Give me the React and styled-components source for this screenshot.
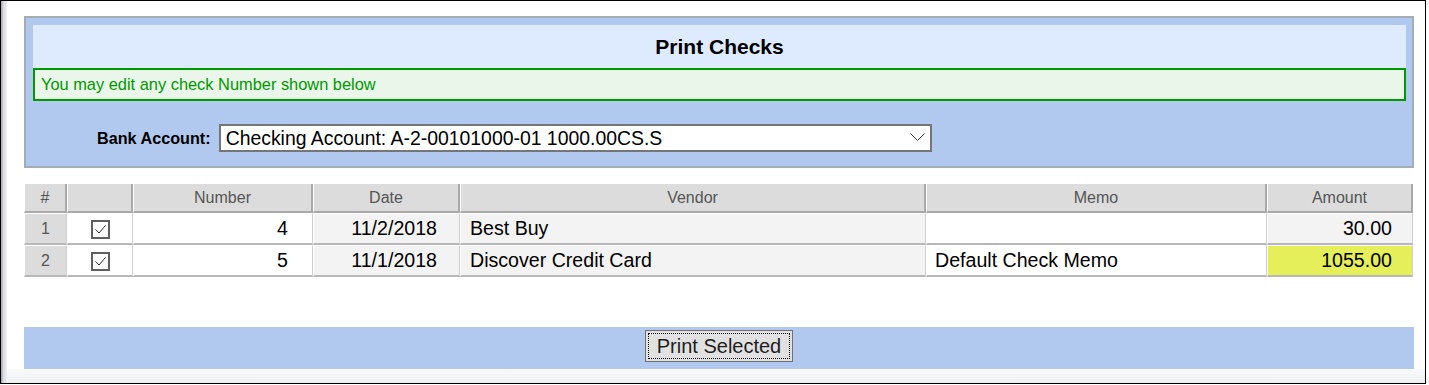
import React from 'react';
import styled, { createGlobalStyle } from 'styled-components';

const GlobalStyle = createGlobalStyle`
  html, body {
    margin: 0;
    padding: 0;
    background: #ffffff;
  }
  body {
    font-family: "Liberation Sans", Arial, sans-serif;
  }
`;

const Frame = styled.div`
  width: 1426px;
  height: 384px;
  box-sizing: border-box;
  border: 1px solid #000;
  display: flex;
  background: #fff;
`;

const EdgeStrip = styled.div`
  width: 6px;
  flex: none;
  background: linear-gradient(to right, #a9adb2 0, #a9adb2 1px, #d9dcdf 2px, #e6e8ea 5px, #f3f4f5 6px);
`;

const Content = styled.div`
  flex: 1;
  display: flex;
  flex-direction: column;
  min-width: 0;
`;

const Inner = styled.div`
  flex: 1;
  padding: 15px 11px 0 17px;
  display: flex;
  flex-direction: column;
`;

const BottomStrip = styled.div`
  height: 14px;
  flex: none;
  background: linear-gradient(to bottom, #f9fafb, #eef0f1);
`;

const Panel = styled.div`
  border: 2px solid #a5acb3;
  background: #b1c9ee;
  padding: 7px 6px 14px 7px;
  display: flex;
  flex-direction: column;
`;

const Title = styled.div`
  height: 43px;
  background: #deebfe;
  display: flex;
  align-items: center;
  justify-content: center;
  font-size: 21px;
  font-weight: bold;
  color: #000;
  padding-top: 1px;
  box-sizing: border-box;
`;

const Notice = styled.div`
  height: 33px;
  box-sizing: border-box;
  border: 2px solid #009900;
  background: #eaf6ea;
  color: #009900;
  font-size: 16.4px;
  display: flex;
  align-items: center;
  padding-left: 6px;
`;

const BankRow = styled.div`
  margin-top: 23px;
  height: 28px;
  display: flex;
  align-items: center;
  padding-left: 64px;
`;

const Label = styled.label`
  font-weight: bold;
  font-size: 16.2px;
  color: #000;
  margin-right: 8px;
`;

const SelectWrap = styled.div`
  position: relative;
  width: 713px;
  height: 28px;
`;

const Select = styled.select`
  appearance: none;
  -webkit-appearance: none;
  width: 100%;
  height: 100%;
  box-sizing: border-box;
  border: 2px solid #767676;
  border-radius: 0;
  background: #fff;
  font-family: "Liberation Sans", Arial, sans-serif;
  font-size: 19.4px;
  color: #000;
  padding: 0 0 0 5px;
  margin: 0;
  outline: none;
`;

const Chevron = styled.svg`
  position: absolute;
  right: 7px;
  top: 9px;
  pointer-events: none;
`;

const Table = styled.table`
  margin-top: 16px;
  width: 1389px;
  border-collapse: separate;
  border-spacing: 0;
  table-layout: fixed;
  font-family: "Liberation Sans", Arial, sans-serif;
`;

const Th = styled.th`
  height: 27px;
  padding: 0;
  background: #dcdcdc;
  color: #555;
  font-weight: normal;
  font-size: 16px;
  text-align: center;
  border-left: 1px solid #fff;
  border-right: 2px solid #a9a9a9;
  border-bottom: 2px solid #a9a9a9;
`;

const Td = styled.td`
  height: 29px;
  padding: 0 ${p => p.$pr || 0}px 0 ${p => p.$pl || 0}px;
  background: ${p => p.$bg || '#fff'};
  color: ${p => p.$muted ? '#555' : '#000'};
  font-size: ${p => p.$muted ? '16px' : '19.6px'};
  text-align: ${p => p.$align || 'left'};
  white-space: nowrap;
  overflow: hidden;
  border-left: 1px solid #fff;
  border-right: 1px solid #d0d0d0;
  border-bottom: 2px solid #b8b8b8;
  border-top: 1px solid #fff;
`;

const Box = styled.span`
  display: inline-flex;
  align-items: center;
  justify-content: center;
  width: 19px;
  height: 19px;
  box-sizing: border-box;
  border: 2px solid #5f5f5f;
  background: #fff;
  vertical-align: middle;
`;

const ButtonBar = styled.div`
  margin-top: 50px;
  height: 42px;
  background: #b1c9ee;
  display: flex;
  justify-content: center;
  align-items: flex-start;
  padding-top: 3px;
  box-sizing: border-box;
`;

const Button = styled.button`
  width: 148px;
  height: 32px;
  box-sizing: border-box;
  border: 1px solid #707070;
  background: #e1e1e1;
  padding: 2px;
  margin: 0;
  font-family: "Liberation Sans", Arial, sans-serif;
  font-size: 20px;
  color: #1e1e1e;
  display: flex;
`;

const FocusRing = styled.span`
  flex: 1;
  border: 1px dotted #000;
  display: flex;
  align-items: center;
  justify-content: center;
`;

const columns = [
  { title: '#', width: 43 },
  { title: '', width: 66 },
  { title: 'Number', width: 180 },
  { title: 'Date', width: 147 },
  { title: 'Vendor', width: 466 },
  { title: 'Memo', width: 341 },
  { title: 'Amount', width: 146 },
];

const checks = [
  { n: 1, number: '4', date: '11/2/2018', vendor: 'Best Buy', memo: '', amount: '30.00' },
  { n: 2, number: '5', date: '11/1/2018', vendor: 'Discover Credit Card', memo: 'Default Check Memo', amount: '1055.00', highlight: true },
];

const CheckBox = () => (
  <Box>
    <svg width="13" height="11" viewBox="0 0 13 11">
      <path d="M1.5 5.5 L5 9 L11.5 1.5" fill="none" stroke="#2b2b45" strokeWidth="1" />
    </svg>
  </Box>
);

export default function App() {
  return (
    <>
      <GlobalStyle />
      <Frame>
        <EdgeStrip />
        <Content>
          <Inner>
            <Panel>
              <Title>Print Checks</Title>
              <Notice>You may edit any check Number shown below</Notice>
              <BankRow>
                <Label>Bank Account:</Label>
                <SelectWrap>
                  <Select defaultValue="a">
                    <option value="a">Checking Account: A-2-00101000-01 1000.00CS.S</option>
                  </Select>
                  <Chevron width="15" height="9" viewBox="0 0 15 9">
                    <path d="M0.5 0.5 L7.5 7.5 L14.5 0.5" fill="none" stroke="#333" strokeWidth="1" />
                  </Chevron>
                </SelectWrap>
              </BankRow>
            </Panel>

            <Table>
              <colgroup>
                {columns.map((c, i) => <col key={i} style={{ width: c.width }} />)}
              </colgroup>
              <thead>
                <tr>
                  {columns.map((c, i) => <Th key={i}>{c.title}</Th>)}
                </tr>
              </thead>
              <tbody>
                {checks.map(row => (
                  <tr key={row.n}>
                    <Td $bg="#dcdcdc" $muted $align="center">{row.n}</Td>
                    <Td $align="center"><CheckBox /></Td>
                    <Td $align="right" $pr={24}>{row.number}</Td>
                    <Td $bg="#f3f3f3" $align="right" $pr={22}>{row.date}</Td>
                    <Td $bg="#f3f3f3" $pl={9}>{row.vendor}</Td>
                    <Td $pl={8}>{row.memo}</Td>
                    <Td $bg={row.highlight ? '#e4ef5a' : '#f3f3f3'} $align="right" $pr={20}>{row.amount}</Td>
                  </tr>
                ))}
              </tbody>
            </Table>

            <ButtonBar>
              <Button><FocusRing>Print Selected</FocusRing></Button>
            </ButtonBar>
          </Inner>
          <BottomStrip />
        </Content>
      </Frame>
    </>
  );
}
